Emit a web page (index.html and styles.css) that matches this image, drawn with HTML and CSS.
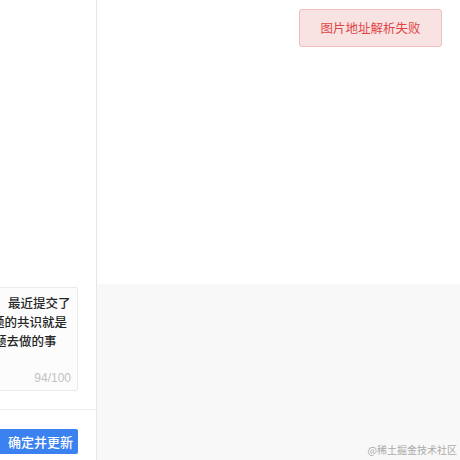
FILE: index.html
```html
<!DOCTYPE html>
<html lang="zh-CN">
<head>
<meta charset="utf-8">
<title>编辑</title>
<link rel="stylesheet" href="styles.css">
</head>
<body>
<div class="page">
  <aside class="side">
    <div class="editor">
      <div class="line l1">最近提交了</div>
      <div class="line l2">题的共识就是</div>
      <div class="line l3">题去做的事</div>
      <div class="count">94/100</div>
    </div>
    <div class="footer">
      <button class="btn">确定并更新</button>
    </div>
  </aside>
  <main class="main">
    <div class="top"></div>
    <div class="bottom"></div>
  </main>
</div>
<div class="toast">图片地址解析失败</div>
<div class="watermark">@稀土掘金技术社区</div>
</body>
</html>
```
FILE: styles.css
```css
* { box-sizing: border-box; }
html, body {
  margin: 0;
  padding: 0;
  width: 460px;
  height: 460px;
  overflow: hidden;
  font-family: "Noto Sans CJK SC", "Noto Sans", sans-serif;
  background: #fff;
}
.page {
  display: flex;
  width: 460px;
  height: 460px;
}
.side {
  width: 97px;
  flex: none;
  border-right: 1px solid #e6e6e6;
  display: flex;
  flex-direction: column;
  justify-content: flex-end;
  overflow: hidden;
  background: #fff;
}
.editor {
  height: 104px;
  margin-left: -1px;
  margin-right: 18px;
  border: 1px solid #ebebeb;
  border-radius: 2px;
  background: #fcfcfc;
  padding-top: 5px;
  padding-bottom: 4px;
  display: flex;
  flex-direction: column;
  overflow: hidden;
  color: #262626;
  font-size: 12.5px;
  font-weight: 500;
  line-height: 19px;
}
.line { white-space: nowrap; }
.l1 { padding-left: 8px; }
.l2 { text-indent: -8px; }
.l3 { text-indent: -6px; }
.count {
  margin-top: auto;
  align-self: flex-end;
  padding-right: 6px;
  font-family: "Liberation Sans", sans-serif;
  font-weight: 400;
  font-size: 12px;
  line-height: 16px;
  color: #c2c2c2;
}
.footer {
  margin-top: 18px;
  border-top: 1px solid #eeeeee;
  padding-top: 19px;
  padding-bottom: 6px;
  padding-right: 18px;
}
.btn {
  display: block;
  width: 100%;
  height: 25px;
  margin: 0;
  border: none;
  border-radius: 0 2px 2px 0;
  background: #3b82f0;
  color: #fff;
  font-family: "Noto Sans CJK SC", sans-serif;
  font-size: 13px;
  font-weight: 500;
  line-height: 25px;
  padding: 0 0 0 8px;
  text-align: left;
}
.main {
  flex: 1;
  display: flex;
  flex-direction: column;
}
.top {
  height: 284px;
  background: #fff;
}
.bottom {
  flex: 1;
  background: #f8f8f8;
}
.toast {
  position: absolute;
  top: 9px;
  left: 299px;
  width: 143px;
  height: 38px;
  border: 1px solid #f0bcbc;
  border-radius: 3px;
  background: #f8e2e2;
  color: #e04545;
  font-size: 12.5px;
  line-height: 36px;
  text-align: center;
}
.watermark {
  position: absolute;
  right: 3px;
  bottom: 3px;
  font-size: 10px;
  line-height: 14px;
  color: #aaaaaa;
}
```
